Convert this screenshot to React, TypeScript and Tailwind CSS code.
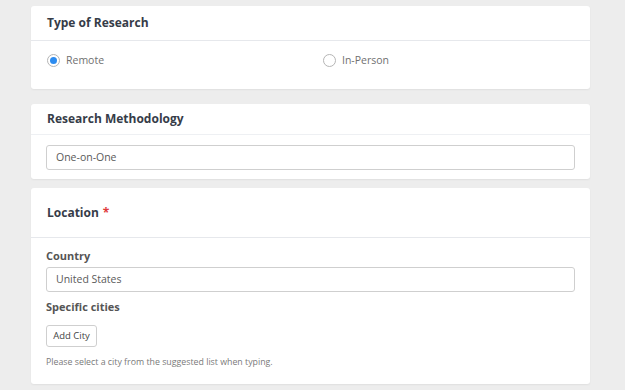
import React from "react";

function Radio({ checked }: { checked?: boolean }) {
  return (
    <span className="flex h-[13px] w-[13px] items-center justify-center rounded-full border border-[#b5b5b5] bg-white">
      {checked && <span className="h-[7px] w-[7px] rounded-full bg-[#2d8cf0]" />}
    </span>
  );
}

function Card({ children, className = "" }: { children: React.ReactNode; className?: string }) {
  return (
    <div className={`w-[559px] rounded-[3px] bg-white shadow-[0_1px_2px_rgba(0,0,0,0.06)] ${className}`}>
      {children}
    </div>
  );
}

export default function App() {
  return (
    <div
      className="h-[390px] w-[625px] overflow-hidden bg-[#ededed] pl-[31px] pt-[6px]"
      style={{ fontFamily: '"Open Sans", "Liberation Sans", sans-serif' }}
    >
      {/* Type of research */}
      <Card>
        <div className="flex h-[35px] items-center border-b border-[#e6e8ec] px-[16px] text-[12px] font-bold text-[#363c48]">
          Type of Research
        </div>
        <div className="flex h-[48px] items-start px-[16px] pt-[12px] text-[10.5px] text-[#707070]">
          <label className="flex w-[276px] items-center gap-[6px]">
            <Radio checked />
            Remote
          </label>
          <label className="flex items-center gap-[6px]">
            <Radio />
            In-Person
          </label>
        </div>
      </Card>

      {/* Methodology */}
      <Card className="mt-[15px]">
        <div className="flex h-[31px] items-center border-b border-[#eef0f3] px-[16px] text-[12px] font-bold text-[#363c48]">
          Research Methodology
        </div>
        <div className="px-[15px] pb-[9px] pt-[10px]">
          <div className="flex h-[25px] w-[529px] items-center rounded-[3px] border border-[#cfcfcf] px-[9px] text-[10.5px] text-[#5a5a5a]">
            One-on-One
          </div>
        </div>
      </Card>

      {/* Location */}
      <Card className="mt-[9px]">
        <div className="flex h-[50px] items-center border-b border-[#e6e8ec] px-[16px] text-[12px] font-bold text-[#363c48]">
          Location
          <span className="ml-[4px] text-[#e03a3a]">*</span>
        </div>
        <div className="px-[15px] pb-[16px] pt-[9px]">
          <div className="flex h-[18px] items-center text-[11px] font-bold text-[#555]">Country</div>
          <div className="mt-[2px] flex h-[25px] w-[529px] items-center rounded-[3px] border border-[#cfcfcf] px-[9px] text-[10.5px] text-[#5a5a5a]">
            United States
          </div>
          <div className="mt-[6px] flex h-[18px] items-center text-[11px] font-bold text-[#555]">Specific cities</div>
          <button className="mt-[9px] flex h-[22px] w-[51px] items-center justify-center rounded-[3px] border border-[#cfcfcf] bg-white text-[9.5px] text-[#444]">
            Add City
          </button>
          <div className="mt-[9px] h-[12px] text-[8.8px] leading-[12px] text-[#7a7a7a]">
            Please select a city from the suggested list when typing.
          </div>
        </div>
      </Card>
    </div>
  );
}
